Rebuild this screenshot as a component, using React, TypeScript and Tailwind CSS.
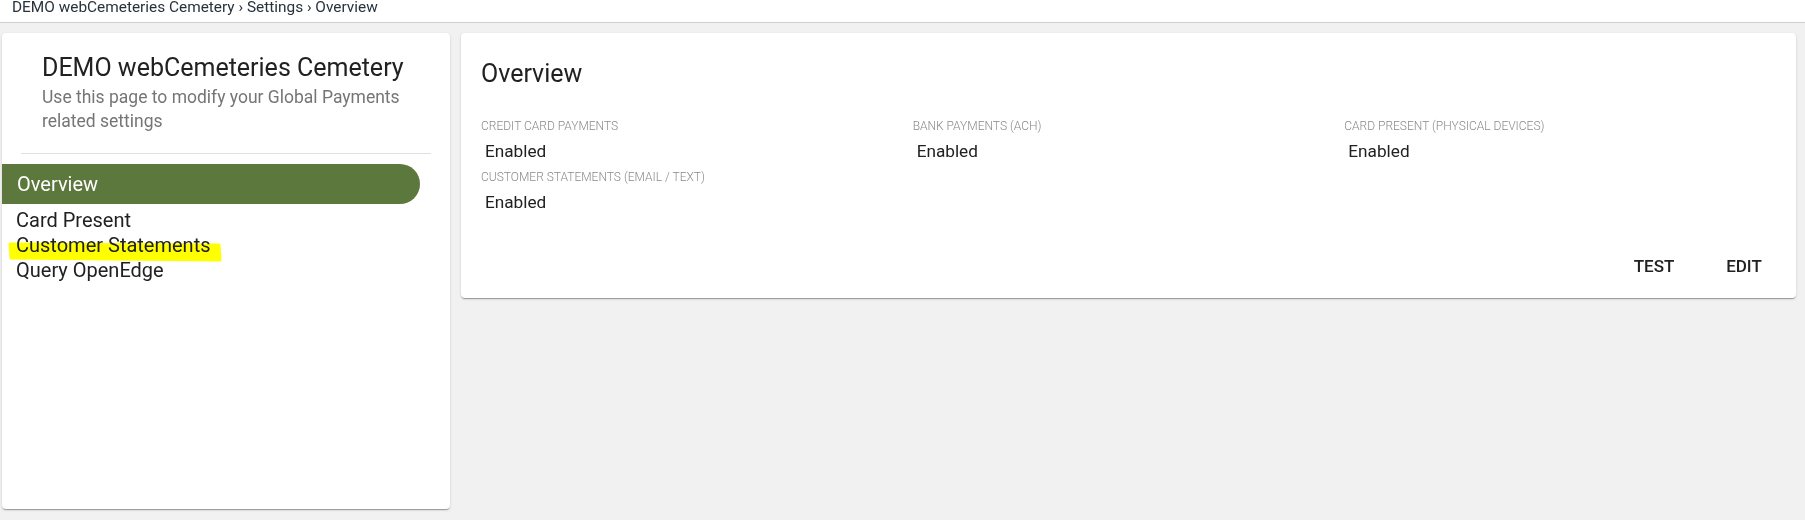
import React from "react";

interface Setting
{
    label: string;
    value: string;
};

const settings: Setting[] = [
    { label: "Credit Card Payments", value: "Enabled" },
    { label: "Bank Payments (ACH)", value: "Enabled" },
    { label: "Card Present (Physical Devices)", value: "Enabled" },
    { label: "Customer Statements (Email / Text)", value: "Enabled" },
];

const navItems = ["Overview", "Card Present", "Customer Statements", "Query OpenEdge"];

const Highlight = () =>
{
    // hand drawn marker stroke under "Customer Statements"
    return (
        <svg className="absolute left-0 top-0 pointer-events-none mix-blend-multiply" width="230" height="34" viewBox="0 0 230 34">
            <polygon points="8,11 217,12 218,27 9,25" fill="#ffff00" stroke="#ffff00" strokeWidth="3" strokeLinejoin="round" />
        </svg>
    );
};

const SideNav = () =>
{
    return (
        <div className="w-[448px] h-[476px] shrink-0 bg-white rounded-[4px] shadow-[0_2px_1px_-1px_rgba(0,0,0,0.2),0_1px_1px_0_rgba(0,0,0,0.14),0_1px_3px_0_rgba(0,0,0,0.12)] flex flex-col">
            <div className="px-10 pt-[19px]">
                <div className="text-[25px] leading-[32px] text-[#212121]">DEMO webCemeteries Cemetery</div>
                <div className="mt-px text-[17.5px] leading-[24px] text-[#757575]">Use this page to modify your Global Payments related settings</div>
            </div>
            <div className="mx-[19px] mt-5 border-t border-[#e0e0e0]"></div>
            <div className="mt-[10px] flex flex-col">
                <div className="w-[418px] h-10 rounded-r-full bg-[#5d783d] pl-[15px] text-[20px] leading-[40px] text-white">{navItems[0]}</div>
                <div className="mt-1 flex flex-col">
                    {navItems.slice(1).map((item) => (
                        <div key={item} className="relative pl-[14px] text-[20px] leading-[25px] text-[#212121]">
                            {item === "Customer Statements" && <Highlight />}
                            <span className="relative">{item}</span>
                        </div>
                    ))}
                </div>
            </div>
        </div>
    );
};

const Overview = () =>
{
    return (
        <div className="flex-1 self-start bg-white rounded-[4px] shadow-[0_2px_1px_-1px_rgba(0,0,0,0.2),0_1px_1px_0_rgba(0,0,0,0.14),0_1px_3px_0_rgba(0,0,0,0.12)] px-5 pt-[25px] pb-[14px]">
            <div className="text-[25px] leading-[32px] text-[#212121]">Overview</div>
            <div className="mt-7 grid grid-cols-3 gap-y-[6px]">
                {settings.map((setting) => (
                    <div key={setting.label} className="flex flex-col">
                        <div className="text-[12px] leading-[16px] font-light uppercase text-[#8a8a8a]">{setting.label}</div>
                        <div className="mt-[5px] ml-1 text-[17.2px] leading-[24px] text-[#212121]">{setting.value}</div>
                    </div>
                ))}
            </div>
            <div className="mt-[34px] flex justify-end gap-[26px]">
                <button className="min-w-16 px-2 py-[6px] text-[17px] leading-[24px] font-medium text-[#212121]">TEST</button>
                <button className="min-w-16 px-2 py-[6px] text-[17px] leading-[24px] font-medium text-[#212121]">EDIT</button>
            </div>
        </div>
    );
};

export default function App()
{
    return (
        <div className="w-[1805px] h-[520px] bg-[#f1f1f1] font-['Roboto',sans-serif] overflow-hidden">
            <div className="h-[23px] bg-white border-b border-[#cfcfcf] pl-3 text-[15.4px] leading-[15px] text-[#28323c]">
                DEMO webCemeteries Cemetery › Settings › Overview
            </div>
            <div className="flex items-start gap-[11px] pl-[2px] pr-[9px] pt-[10px]">
                <SideNav />
                <Overview />
            </div>
        </div>
    );
}
